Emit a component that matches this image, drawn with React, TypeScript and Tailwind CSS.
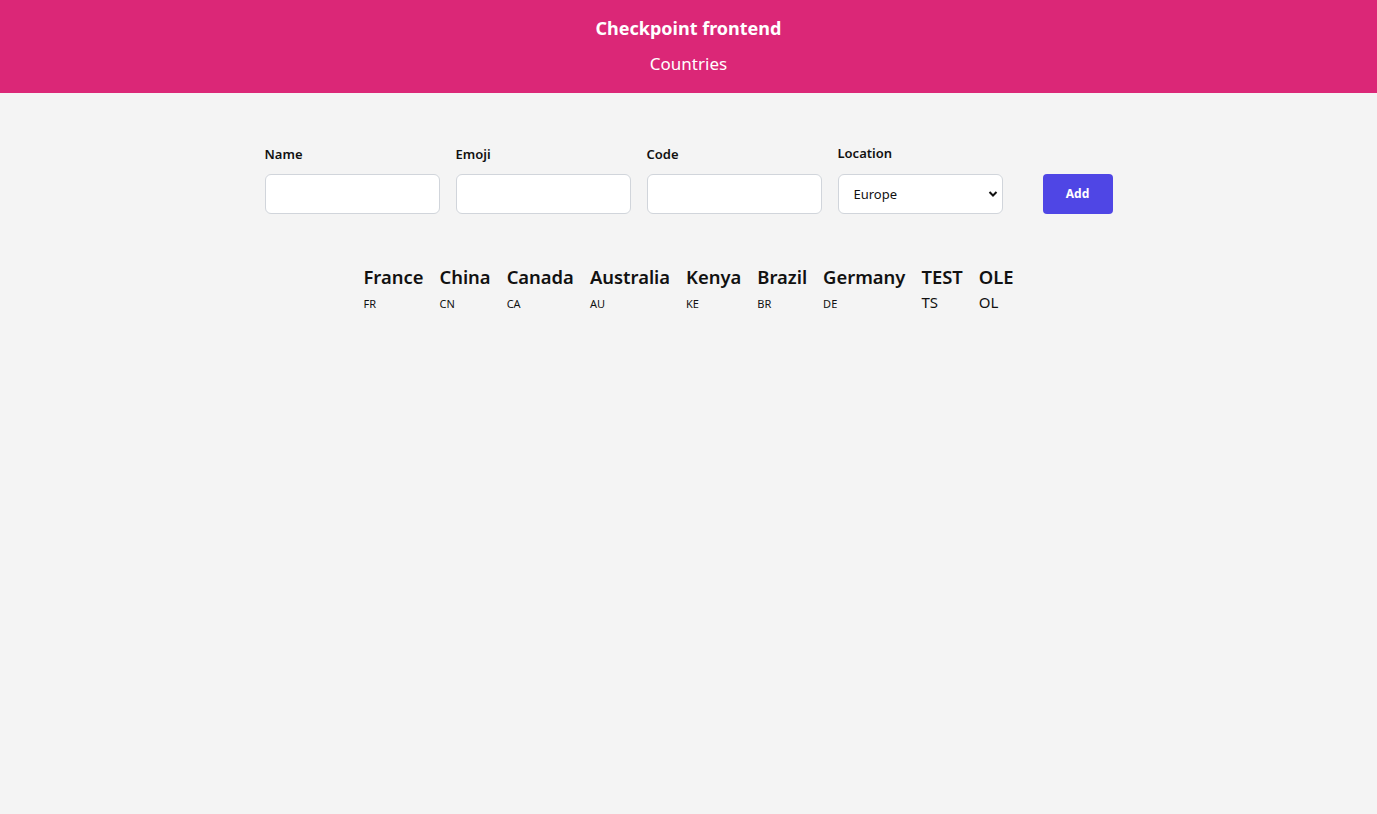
import React from "react";

const countries = [
  { name: "France", code: "FR", small: true },
  { name: "China", code: "CN", small: true },
  { name: "Canada", code: "CA", small: true },
  { name: "Australia", code: "AU", small: true },
  { name: "Kenya", code: "KE", small: true },
  { name: "Brazil", code: "BR", small: true },
  { name: "Germany", code: "DE", small: true },
  { name: "TEST", code: "TS", small: false },
  { name: "OLE", code: "OL", small: false },
];

export default function App() {
  return (
    <div
      className="min-h-[814px] bg-[#f4f4f4] text-[#111]"
      style={{ fontFamily: '"Noto Sans", "Open Sans", sans-serif' }}
    >
      <header className="bg-[#db2777] h-[93px] flex flex-col items-center text-white">
        <h1 className="text-[18px] font-bold mt-[14px] leading-[28px]">Checkpoint frontend</h1>
        <p className="text-[17px] mt-[10px] leading-[24px]">Countries</p>
      </header>

      <main className="flex flex-col items-center">
        <form className="flex items-end mt-[51px] w-[848px]" onSubmit={(e) => e.preventDefault()}>
          <div className="flex flex-col w-[175px]">
            <label className="text-[13px] font-semibold leading-[18px] mb-[11px]">Name</label>
            <input className="h-[40px] rounded-[6px] border border-[#d1d5db] bg-white" />
          </div>
          <div className="flex flex-col w-[175px] ml-[16px]">
            <label className="text-[13px] font-semibold leading-[18px] mb-[11px]">Emoji</label>
            <input className="h-[40px] rounded-[6px] border border-[#d1d5db] bg-white" />
          </div>
          <div className="flex flex-col w-[175px] ml-[16px]">
            <label className="text-[13px] font-semibold leading-[18px] mb-[11px]">Code</label>
            <input className="h-[40px] rounded-[6px] border border-[#d1d5db] bg-white" />
          </div>
          <div className="flex flex-col w-[165px] ml-[16px]">
            <label className="text-[13px] font-semibold leading-[18px] mb-[12px]">Location</label>
            <div className="relative h-[40px] rounded-[6px] border border-[#d1d5db] bg-white flex items-center pl-[15px] text-[13px]">
              <span className="mt-[1px]">Europe</span>
              <svg
                className="absolute right-[4px] top-[15px]"
                width="10"
                height="8"
                viewBox="0 0 10 8"
              >
                <path d="M1.5 2 L5 5.5 L8.5 2" stroke="#111" strokeWidth="2" fill="none" />
              </svg>
            </div>
          </div>
          <button
            type="submit"
            className="ml-[40px] w-[70px] h-[40px] rounded-[4px] bg-[#4f46e5] text-white text-[12px] font-bold"
          >
            Add
          </button>
        </form>

        <div className="flex gap-[16px] mt-[50px]">
          {countries.map((c) => (
            <div key={c.name} className="flex flex-col">
              <span className="text-[18.4px] font-semibold leading-[26px]">{c.name}</span>
              {c.small ? (
                <span className="text-[11px] leading-[14px] mt-[7px]">{c.code}</span>
              ) : (
                <span className="text-[15px] leading-[18px] mt-[3px]">{c.code}</span>
              )}
            </div>
          ))}
        </div>
      </main>
    </div>
  );
}
